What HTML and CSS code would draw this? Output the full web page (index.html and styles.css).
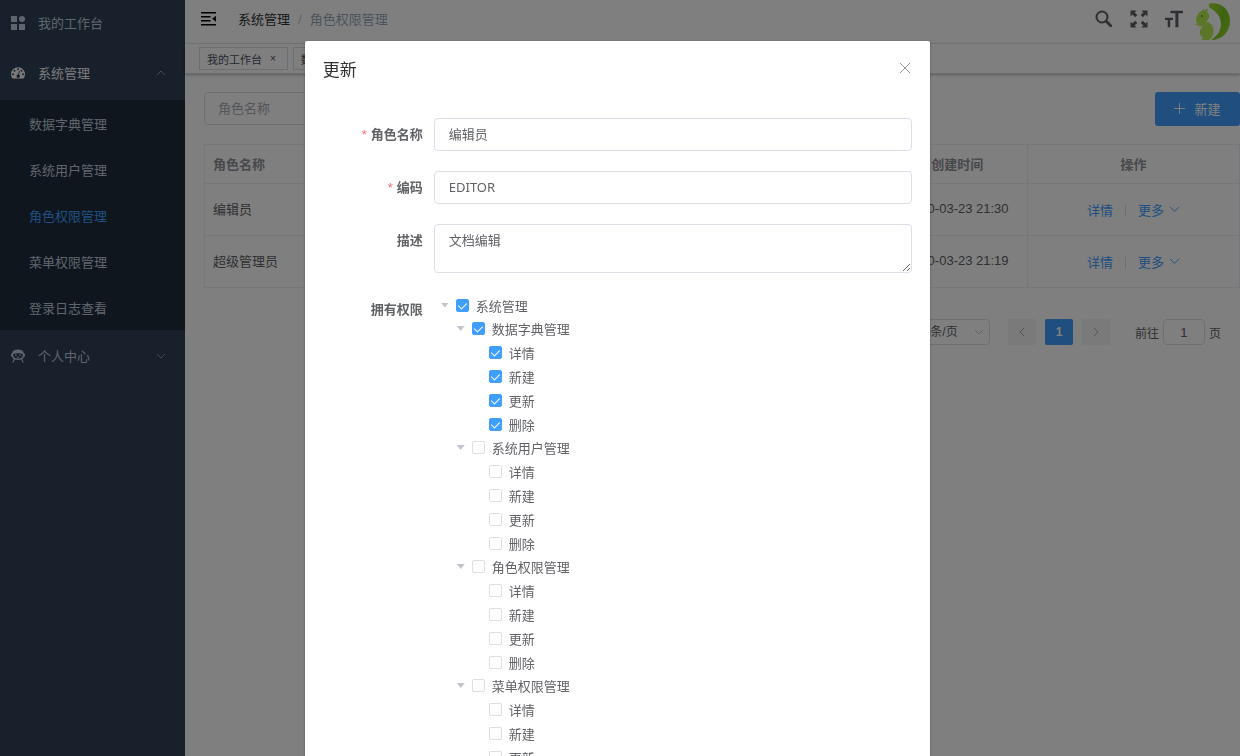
FILE: index.html
```
<!DOCTYPE html>
<html lang="zh-CN">
<head>
  <meta charset="UTF-8" />
  <meta name="viewport" content="width=device-width, initial-scale=1.0"/>
  <title>角色权限管理</title>
  <link rel="stylesheet" href="styles.css">
</head>
<body>
  <div class="app">
    <!-- SIDEBAR -->
    <nav class="sidebar" aria-label="主菜单">
      <a class="menu-item" href="#">
        <svg class="menu-icon" viewBox="0 0 14 14"><path d="M0 0h6v6H0zM0 8h6v6H0zM8 8h6v6H8z"/><circle cx="11" cy="3" r="3"/></svg>
        我的工作台
      </a>
      <a class="menu-item open" href="#">
        <svg class="menu-icon" viewBox="0 0 14 14"><path fill-rule="evenodd" d="M7 1.300a7 7 0 0 0-7 7c0 1.500.4 2.700 1 3.800.2.300.4.400.7.400h10.600c.3 0 .5-.1.700-.4.6-1.100 1-2.300 1-3.800a7 7 0 0 0-7-7zM2 7.300a1 1 0 1 1 0 2 1 1 0 0 1 0-2zm1.500-3.500a1 1 0 1 1 0 2 1 1 0 0 1 0-2zM7 2.300a1 1 0 1 1 0 2 1 1 0 0 1 0-2zm3.500 1.500a1 1 0 1 1 0 2 1 1 0 0 1 0-2zM12 7.300a1 1 0 1 1 0 2 1 1 0 0 1 0-2zM8 5.100l.8.200-.8 3.400a1.600 1.600 0 1 1-.9-.2z"/></svg>
        系统管理
        <svg class="arrow" viewBox="0 0 12 12"><path d="M2 8l4-4 4 4"/></svg>
      </a>
      <div class="submenu">
        <a href="#">数据字典管理</a>
        <a href="#">系统用户管理</a>
        <a href="#" class="active">角色权限管理</a>
        <a href="#">菜单权限管理</a>
        <a href="#">登录日志查看</a>
      </div>
      <a class="menu-item" href="#">
        <svg class="menu-icon" viewBox="0 0 14 14"><path fill-rule="evenodd" d="M7 .5c3.300 0 5.600 1.500 6 4 .7.200 1 .8 1 1.700s-.4 1.500-1.100 1.700c-.3.900-.9 1.600-1.700 2.100l1.600 3.500h-1.200l-1.500-3c-2 .6-4.200.6-6.200 0l-1.500 3H1.200L2.800 10C2 9.500 1.400 8.800 1.100 7.900.4 7.700 0 7.100 0 6.200s.3-1.500 1-1.700C1.400 2 3.700.5 7 .5zM2.300 5C1.800 8 3.500 9.600 7 9.600S12.200 8 11.700 5C9 4 5 4 2.300 5z"/><circle cx="4.800" cy="6.300" r=".8"/><circle cx="9.200" cy="6.300" r=".8"/><path d="M5.500 7.800h3v.7h-3z"/></svg>
        个人中心
        <svg class="arrow" viewBox="0 0 12 12"><path d="M2 4l4 4 4-4"/></svg>
      </a>
    </nav>

    <!-- MAIN -->
    <div class="main">
      <header class="navbar">
        <svg class="hamburger" viewBox="0 0 16 14"><path d="M0 0h15v1.500H0zM0 4h9.500v1.500H0zM0 8h9.500v1.500H0zM0 12h15v1.500H0zM15 3.800v6L11 6.800z"/></svg>
        <div class="breadcrumb"><a href="#">系统管理</a><span class="sep">/</span><span>角色权限管理</span></div>
        <div class="tools">
          <svg viewBox="0 0 18 18"><circle cx="7" cy="7" r="5.500" fill="none" stroke="currentColor" stroke-width="2"/><path d="M11.500 11.500l4.200 4.200" stroke="currentColor" stroke-width="2.800" stroke-linecap="round"/></svg>
          <svg viewBox="0 0 18 18"><path d="M.5.500h6L4.600 2.400l2.700 2.700-2.200 2.200-2.700-2.700L.5 6.500zM17.500.500v6l-1.900-1.900-2.700 2.700-2.200-2.200 2.700-2.700L11.500.500zM.5 17.500v-6l1.900 1.900 2.700-2.700 2.200 2.200-2.700 2.700 1.900 1.900zM17.500 17.500h-6l1.900-1.900-2.700-2.700 2.200-2.200 2.700 2.700 1.900-1.900z"/></svg>
          <svg viewBox="0 0 18 18"><path d="M5.500.800H18v2.400h-4.600v14h-3V3.200H5.500zM0 7.800h8v2.200H5.200v7.200H2.700V10H0z"/></svg>
          <svg class="avatar" viewBox="0 0 36 38">
            <defs>
              <linearGradient id="tail" x1="0" y1="0" x2="1" y2="1">
                <stop offset="0" stop-color="#a4e030"/><stop offset=".5" stop-color="#7cc420"/><stop offset="1" stop-color="#98dc2c"/>
              </linearGradient>
            </defs>
            <path fill="url(#tail)" d="M15 .5C27-1 35 7 35 18s-8 19-19 19c6-4 10-9 10-16 0-7-4-12-11-16-1.500-1-1.500-4 0-4.500z"/>
            <path class="squirrel" d="M7 8l1-2.500 1.500 2L12.300 5l.2 4c2 2 2.500 5 .5 7.500L11.500 19c4.500.5 7 4.500 7 8.500 0 4-1.500 7.500-4.500 9.500H6.500c0-1.500.8-2 2.500-2-4.500-2-5-6-3-9.500l1.500-2.500-3.500.5-.5-1.500L.5 22l.5-1.500 3-.5c-3-.5-3.500-2-3-4C2 12 4 8.500 7 8z"/>
            <circle class="eye" cx="7" cy="13" r="1"/>
          </svg>
        </div>
      </header>
      <div class="tags">
        <a class="tag" href="#">我的工作台<span class="x">×</span></a>
        <a class="tag" href="#">数据字典管理<span class="x">×</span></a>
      </div>

      <div class="content">
        <div class="filter">
          <input type="text" placeholder="角色名称" aria-label="角色名称">
          <button class="btn-new" type="button"><svg viewBox="0 0 12 12"><path d="M6 0v12M0 6h12"/></svg>新建</button>
        </div>

        <table class="table">
          <thead>
            <tr><th>角色名称</th><th class="time">创建时间</th><th class="ops">操作</th></tr>
          </thead>
          <tbody>
            <tr>
              <td>编辑员</td><td class="time">2020-03-23 21:30</td>
              <td class="ops"><a href="#">详情</a><i></i><a href="#">更多<svg viewBox="0 0 12 12"><path d="M1 3l5 5 5-5"/></svg></a></td>
            </tr>
            <tr>
              <td>超级管理员</td><td class="time">2020-03-23 21:19</td>
              <td class="ops"><a href="#">详情</a><i></i><a href="#">更多<svg viewBox="0 0 12 12"><path d="M1 3l5 5 5-5"/></svg></a></td>
            </tr>
          </tbody>
        </table>

        <div class="pagination">
          <div class="size-wrap">
            <select class="size" aria-label="每页条数"><option>10条/页</option></select>
            <svg viewBox="0 0 12 12"><path d="M2 4l4 4 4-4"/></svg>
          </div>
          <button type="button" class="page" aria-label="上一页"><svg viewBox="0 0 12 12"><path d="M8 2L4 6l4 4"/></svg></button>
          <button type="button" class="page current">1</button>
          <button type="button" class="page" aria-label="下一页"><svg viewBox="0 0 12 12"><path d="M4 2l4 4-4 4"/></svg></button>
          <label class="jump">前往<input type="text" value="1">页</label>
        </div>
      </div>
    </div>
  </div>

  <!-- DIALOG -->
  <div class="mask">
    <div class="dialog" role="dialog" aria-label="更新">
      <div class="dialog-header">
        <h2>更新</h2>
        <button type="button" class="close" aria-label="关闭"><svg viewBox="0 0 12 12"><path d="M1 1l10 10M11 1L1 11"/></svg></button>
      </div>
      <form class="form">
        <label class="required" for="name">角色名称</label>
        <input type="text" id="name" value="编辑员">
        <label class="required" for="code">编码</label>
        <input type="text" id="code" value="EDITOR">
        <label for="desc">描述</label>
        <textarea id="desc">文档编辑</textarea>
        <span class="label">拥有权限</span>
        <div class="tree" id="tree"></div>
      </form>
    </div>
  </div>

  <script>
  // PERMISSION TREE
  const actions = ['详情', '新建', '更新', '删除'];
  const modules = [
    {name:'数据字典管理', checked:true},
    {name:'系统用户管理', checked:false},
    {name:'角色权限管理', checked:false},
    {name:'菜单权限管理', checked:false},
  ];

  const row = (name, checked, level) => `
    <div class="node ${level}">
      ${level === 'leaf' ? '' : '<span class="caret"></span>'}
      <label><input type="checkbox" ${checked ? 'checked' : ''}>${name}</label>
    </div>`;

  document.getElementById('tree').innerHTML = row('系统管理', true, 'root') +
    modules.map(m =>
      row(m.name, m.checked, 'branch') +
      actions.map(a => row(a, m.checked, 'leaf')).join('')
    ).join('');
  </script>
</body>
</html>
```
FILE: styles.css
```
/* RESET & BASE */
* { margin:0; padding:0; box-sizing:border-box; }
body, html { height:100%; overflow:hidden; }
body, input, button, textarea, select {
  font-family:"Liberation Sans","Noto Sans CJK SC",sans-serif;
  font-size:13px; color:#606266;
}
a { color:inherit; text-decoration:none; }
svg { display:block; fill:currentColor; flex:none; }
input, textarea, select { border:1px solid #dcdfe6; border-radius:4px; background:#fff; outline:none; }
button { border:none; }

.app { display:flex; height:100%; }

/* SIDEBAR */
.sidebar { width:185px; flex:none; background:#304156; color:#bfcbd9; }
.menu-item {
  display:flex; align-items:center; height:53px; padding:0 18px 2px 11px;
}
.menu-item:first-child { height:47px; }
.menu-item.open { color:#f4f4f5; }
.menu-icon { width:14px; height:14px; margin-right:13px; }
.arrow {
  width:12px; height:12px; margin-left:auto;
  fill:none; stroke:#909399;
}
.submenu { background:#1f2d3d; }
.submenu a { display:flex; align-items:center; height:46px; padding-left:29px; }
.submenu .active { color:#409eff; }

/* NAVBAR */
.main { flex:1; min-width:0; background:#fff; }
.navbar {
  display:flex; align-items:center; height:44px; padding:0 9px 6px 16px;
  border-bottom:1px solid #f0f0f0;
}
.hamburger { width:16px; height:14px; color:#000; }
.breadcrumb { margin-left:21px; color:#97a8be; }
.breadcrumb a { color:#303133; }
.breadcrumb .sep { margin:0 8px; color:#c0c4cc; }
.tools { display:flex; align-items:center; gap:17px; margin-left:auto; color:#5a5e66; }
.tools svg { width:18px; height:18px; }
.tools .avatar { width:36px; height:38px; margin:6px 0 0 -5px; }
.squirrel { fill:#b4ec50; }
.eye { fill:#5c8c20; }

/* TAGS */
.tags {
  display:flex; gap:5px; height:30px; padding:3px 14px;
  border-bottom:1px solid #d8dce5; box-shadow:0 1px 3px rgba(0,0,0,.3);
}
.tag {
  display:flex; align-items:center; height:23px; padding:0 11px 0 7px;
  border:1px solid #d8dce5; color:#495060; font-size:11px; white-space:nowrap;
}
.tag .x { margin-left:8px; font-size:10px; }

/* CONTENT */
.content { padding:18px 0 0 19px; }
.filter { display:flex; justify-content:space-between; height:34px; }
.filter input { width:185px; height:33px; padding:0 13px; }
.filter input::placeholder { color:#a8abb2; }
.btn-new {
  display:flex; align-items:center; justify-content:center; gap:9px;
  width:85px; padding-bottom:1px; border-radius:3px; background:#409eff; color:#fff;
}
.btn-new svg { width:11px; height:11px; stroke:#fff; }

.table {
  width:100%; margin-top:18px; table-layout:fixed;
  border:1px solid #ebeef5; border-collapse:collapse;
}
.table th { height:39px; color:#909399; text-align:left; }
.table td { height:52px; }
.table th, .table td { padding:0 8px 2px; border-bottom:1px solid #ebeef5; }
.table .time { width:140px; border-right:1px solid #ebeef5; text-align:center; white-space:nowrap; }
.table .ops { width:212px; text-align:center; }
.table td.ops { padding-bottom:0; }
td.ops a { display:inline-flex; align-items:center; color:#409eff; }
td.ops i { display:inline-block; width:1px; height:12px; margin:0 12px; background:#dcdfe6; vertical-align:-2px; }
td.ops svg { width:11px; height:11px; margin-left:5px; fill:none; stroke:#409eff; }

/* PAGINATION */
.pagination { display:flex; align-items:center; justify-content:flex-end; margin-top:31px; padding-right:19px; }
.size-wrap { position:relative; }
.size { width:92px; height:26px; padding-left:18px; appearance:none; font-size:12px; }
.size-wrap svg { position:absolute; right:5px; top:7px; width:12px; height:12px; fill:none; stroke:#c0c4cc; }
.page {
  display:flex; align-items:center; justify-content:center;
  width:28px; height:26px; margin-left:9px; border-radius:2px;
  background:#f4f4f5; color:#909399; font-size:12px;
}
.size-wrap + .page { margin-left:18px; }
.page svg { width:12px; height:12px; fill:none; stroke:#a8abb2; }
.page.current { background:#409eff; color:#fff; font-weight:700; }
.jump { display:flex; align-items:center; gap:4px; margin-left:25px; font-size:12px; }
.jump input { width:42px; height:26px; text-align:center; }

/* DIALOG */
.mask {
  position:fixed; inset:0; z-index:10; overflow:hidden;
  padding-right:5px; background:rgba(0,0,0,.5);
}
.dialog {
  width:calc(50% + 8px); margin:41px auto 0; padding:16px 18px;
  background:#fff; border-radius:2px; box-shadow:0 1px 3px rgba(0,0,0,.3);
}
.dialog-header { display:flex; align-items:center; justify-content:space-between; height:22px; }
.dialog h2 { font-size:17px; font-weight:400; color:#303133; }
.close { width:15px; height:18px; background:none; }
.close svg { width:12px; height:12px; margin:0 auto; fill:none; stroke:#909399; }

.form {
  display:grid; grid-template-columns:100px 1fr; gap:20px 11px;
  padding:39px 0 0;
}
.form > label, .label { text-align:right; font-weight:700; line-height:33px; }
.required::before { content:'*'; margin-right:4px; color:#f56c6c; font-weight:400; }
.form > input, .form textarea { width:100%; padding:0 14px; font-family:"Noto Sans","Noto Sans CJK SC",sans-serif; }
.form > input { height:33px; padding-bottom:2px; }
.form textarea { display:block; height:49px; padding-top:5px; line-height:20px; resize:vertical; }

/* TREE */
.node { display:flex; align-items:center; height:24px; }
.node label { display:flex; align-items:center; gap:7px; }
.branch { height:23px; padding-left:16px; }
.leaf { padding-left:55px; }
.caret {
  width:8px; height:5px; margin:0 7px; background:#c0c4cc;
  clip-path:polygon(0 0, 100% 0, 50% 100%);
}
.node input {
  appearance:none; width:13px; height:13px; border-radius:2px;
}
.node input:checked { background:#409eff; border-color:#409eff; }
.node input:checked::after {
  content:''; display:block; width:4px; height:7px; margin:1px auto 0;
  border:solid #fff; border-width:0 1px 1px 0; transform:rotate(45deg);
}
```
